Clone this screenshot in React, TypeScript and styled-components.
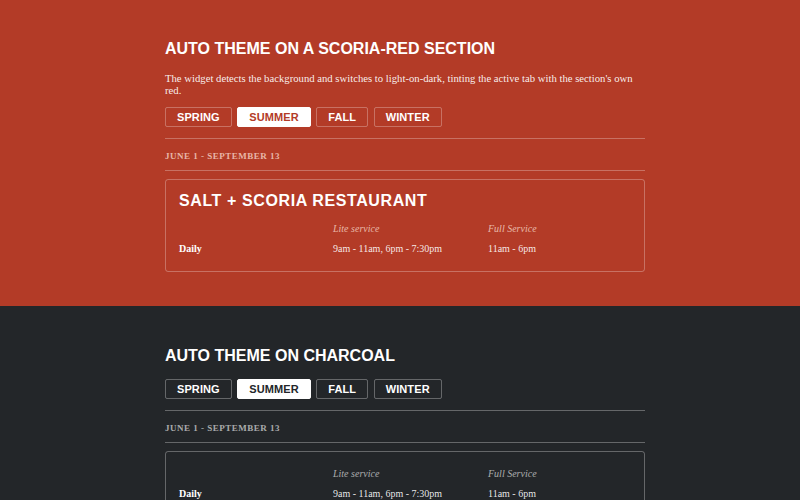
import React from "react";
import styled, { createGlobalStyle } from "styled-components";

const RED = "#b33b27";
const CHARCOAL = "#232629";

const Global = createGlobalStyle`
  html, body {
    margin: 0;
    padding: 0;
    background: ${CHARCOAL};
  }
  * {
    box-sizing: border-box;
  }
`;

const seasons = ["Spring", "Summer", "Fall", "Winter"];

type Theme = { bg: string; muted: string; line: string; active: string };

const redTheme: Theme = {
  bg: RED,
  muted: "rgba(255, 230, 222, 0.72)",
  line: "rgba(255, 255, 255, 0.28)",
  active: RED,
};

const charcoalTheme: Theme = {
  bg: CHARCOAL,
  muted: "rgba(255, 255, 255, 0.62)",
  line: "rgba(255, 255, 255, 0.3)",
  active: CHARCOAL,
};

const Hours = ({ t, title }: { t: Theme; title?: string }) => (
  <Card $line={t.line} $titled={!!title}>
    {title && <CardTitle>{title}</CardTitle>}
    <Table>
      <Cell />
      <HeadCell $c={t.muted}>Lite service</HeadCell>
      <HeadCell $c={t.muted}>Full Service</HeadCell>
      <DayCell>Daily</DayCell>
      <Cell>9am - 11am, 6pm - 7:30pm</Cell>
      <Cell>11am - 6pm</Cell>
    </Table>
  </Card>
);

const Widget = ({ t, title }: { t: Theme; title?: string }) => (
  <>
    <Tabs>
      {seasons.map((s) => (
        <Tab key={s} $on={s === "Summer"} $line={t.line} $active={t.active}>
          {s}
        </Tab>
      ))}
    </Tabs>
    <Rule $line={t.line} />
    <DateLabel $c={t.muted}>June 1 - September 13</DateLabel>
    <Rule $line={t.line} />
    <Hours t={t} title={title} />
  </>
);

const App = () => {
  return (
    <>
      <Global />
      <Section $bg={redTheme.bg} $h={306} $top={38}>
        <Inner>
          <Heading $mb={13}>Auto theme on a scoria-red section</Heading>
          <Lead>
            The widget detects the background and switches to light-on-dark,
            tinting the active tab with the section's own red.
          </Lead>
          <Widget t={redTheme} title="Salt + Scoria Restaurant" />
        </Inner>
      </Section>
      <Section $bg={charcoalTheme.bg} $top={39}>
        <Inner>
          <Heading $mb={13}>Auto theme on charcoal</Heading>
          <Widget t={charcoalTheme} />
        </Inner>
      </Section>
    </>
  );
};

export default App;

const Section = styled.section<{ $bg: string; $h?: number; $top: number }>`
  background: ${(p) => p.$bg};
  color: #fff;
  height: ${(p) => (p.$h ? `${p.$h}px` : "auto")};
  padding: ${(p) => p.$top}px 0 40px;
  overflow: hidden;
`;

const Inner = styled.div`
  width: 490px;
  padding-left: 10px;
  margin: 0 auto;
`;

const Heading = styled.h2<{ $mb?: number }>`
  margin: 0 0 ${(p) => p.$mb ?? 10}px;
  font-family: "Liberation Sans", Arial, sans-serif;
  font-size: 16px;
  font-weight: 700;
  line-height: 21px;
  text-transform: uppercase;
`;

const Lead = styled.p`
  margin: 0 0 11px;
  font-family: "Liberation Serif", "Times New Roman", serif;
  font-size: 10.7px;
  line-height: 12.2px;
  color: rgba(255, 255, 255, 0.92);
`;

const Tabs = styled.div`
  display: flex;
  gap: 5.5px;
`;

const Tab = styled.button<{ $on: boolean; $line: string; $active: string }>`
  height: 20px;
  padding: 0 11px;
  border-radius: 2px;
  border: 1px solid ${(p) => (p.$on ? "#fff" : p.$line)};
  background: ${(p) => (p.$on ? "#fff" : "transparent")};
  color: ${(p) => (p.$on ? p.$active : "#fff")};
  font-family: "Liberation Sans", Arial, sans-serif;
  font-size: 11px;
  font-weight: 700;
  letter-spacing: 0.1px;
  text-transform: uppercase;
  cursor: pointer;
`;

const Rule = styled.hr<{ $line: string }>`
  margin: 11px 0 0;
  border: 0;
  border-top: 1px solid ${(p) => p.$line};
`;

const DateLabel = styled.div<{ $c: string }>`
  padding: 11px 0 8px;
  font-family: "Liberation Serif", "Times New Roman", serif;
  font-size: 9px;
  font-weight: 700;
  letter-spacing: 0.5px;
  text-transform: uppercase;
  color: ${(p) => p.$c};
  line-height: 12px;
  & + hr {
    margin-top: 0;
  }
`;

const Card = styled.div<{ $line: string; $titled: boolean }>`
  margin-top: 8px;
  border: 1px solid ${(p) => p.$line};
  border-radius: 3px;
  padding: ${(p) => (p.$titled ? 14 : 15)}px 13px 16px;
`;

const CardTitle = styled.h3`
  margin: -3px 0 11px;
  font-family: "Liberation Sans", Arial, sans-serif;
  font-size: 16px;
  font-weight: 700;
  line-height: 20px;
  letter-spacing: 0.6px;
  text-transform: uppercase;
`;

const Table = styled.div`
  display: grid;
  grid-template-columns: 154px 155px 1fr;
  row-gap: 7px;
  font-family: "Liberation Serif", "Times New Roman", serif;
  font-size: 10px;
  line-height: 13px;
`;

const Cell = styled.div`
  color: rgba(255, 255, 255, 0.9);
`;

const HeadCell = styled.div<{ $c: string }>`
  font-style: italic;
  color: ${(p) => p.$c};
`;

const DayCell = styled.div`
  font-weight: 700;
`;
